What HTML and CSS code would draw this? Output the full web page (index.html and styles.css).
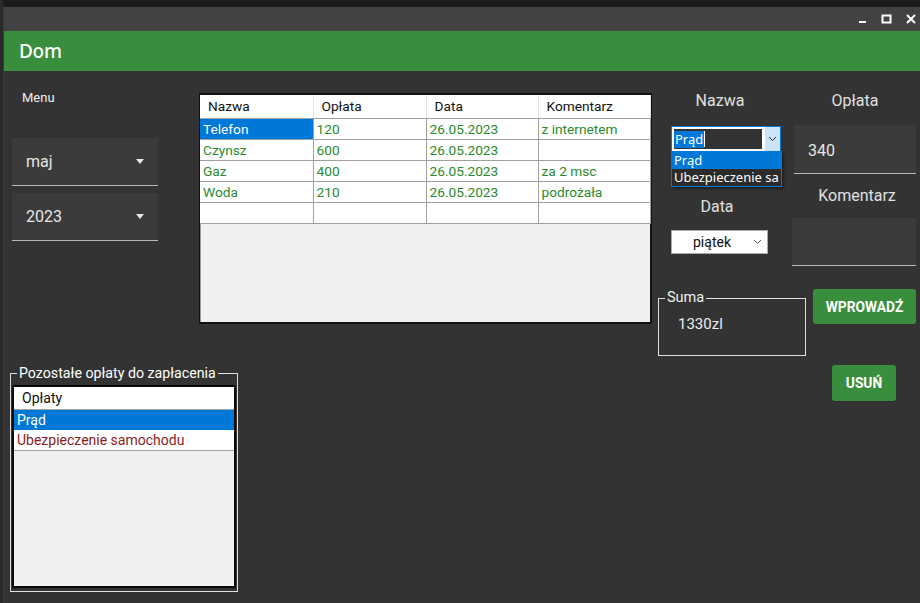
FILE: index.html
```html
<!DOCTYPE html>
<html lang="pl">
<head>
<meta charset="utf-8">
<title>Dom</title>
<link rel="stylesheet" href="styles.css">
</head>
<body>
<div class="window">
  <div class="titlebar">
    <svg class="tb-icon" width="10" height="10" viewBox="0 0 10 10"><rect x="1" y="7" width="7" height="2" fill="#fff"/></svg>
    <svg class="tb-icon" width="12" height="10" viewBox="0 0 12 10"><rect x="1.5" y="1.5" width="8" height="7" fill="none" stroke="#fff" stroke-width="2"/></svg>
    <svg class="tb-icon" width="11" height="10" viewBox="0 0 11 10"><path d="M1 1 L9 9 M9 1 L1 9" stroke="#fff" stroke-width="2"/></svg>
  </div>
  <div class="header">Dom</div>
  <div class="content">
    <div class="toprow">
      <div class="leftcol">
        <div class="menu">Menu</div>
        <div class="mcombo first"><span>maj</span><span class="caret"></span></div>
        <div class="mcombo"><span>2023</span><span class="caret"></span></div>
      </div>
      <div class="grid">
        <table>
          <thead>
            <tr><th>Nazwa</th><th>Opłata</th><th>Data</th><th>Komentarz</th></tr>
          </thead>
          <tbody>
            <tr><td class="sel">Telefon</td><td>120</td><td>26.05.2023</td><td>z internetem</td></tr>
            <tr><td>Czynsz</td><td>600</td><td>26.05.2023</td><td></td></tr>
            <tr><td>Gaz</td><td>400</td><td>26.05.2023</td><td>za 2 msc</td></tr>
            <tr><td>Woda</td><td>210</td><td>26.05.2023</td><td>podrożała</td></tr>
            <tr><td>&nbsp;</td><td></td><td></td><td></td></tr>
          </tbody>
        </table>
      </div>
      <div class="rightpanel">
        <div class="rcol1">
          <div class="lbl lbl-nazwa">Nazwa</div>
          <div class="wcombo">
            <div class="wc-input"><span class="wc-sel">Prąd</span><span class="wc-cursor"></span></div>
            <div class="wc-btn"><svg width="9" height="6" viewBox="0 0 9 6"><path d="M1 1 L4.5 4.5 L8 1" fill="none" stroke="#333" stroke-width="1"/></svg></div>
            <div class="wc-list">
              <div class="wc-item active">Prąd</div>
              <div class="wc-item">Ubezpieczenie sa</div>
            </div>
          </div>
          <div class="lbl lbl-data">Data</div>
          <div class="datebox"><span>piątek</span><svg width="9" height="6" viewBox="0 0 9 6"><path d="M1 1 L4.5 4.5 L8 1" fill="none" stroke="#555" stroke-width="1"/></svg></div>
          <fieldset class="suma">
            <legend>Suma</legend>
            <div class="suma-val">1330zl</div>
          </fieldset>
        </div>
        <div class="rcol2">
          <div class="lbl lbl-oplata">Opłata</div>
          <div class="mtext">340</div>
          <div class="lbl lbl-kom">Komentarz</div>
          <div class="mtext kom"></div>
          <button class="gbtn wpr">WPROWADŹ</button>
        </div>
      </div>
    </div>
    <div class="bottomrow">
      <fieldset class="pozo">
        <legend>Pozostałe opłaty do zapłacenia</legend>
        <div class="list">
          <div class="list-head">Opłaty</div>
          <div class="list-row sel">Prąd</div>
          <div class="list-row red">Ubezpieczenie samochodu</div>
        </div>
      </fieldset>
      <button class="gbtn usun">USUŃ</button>
    </div>
  </div>
</div>
</body>
</html>
```
FILE: styles.css
```css
* { box-sizing: border-box; }
html, body { margin: 0; padding: 0; }
body {
  background: #1c1c1c;
  width: 920px;
  height: 603px;
  overflow: hidden;
  font-family: Roboto, "Noto Sans", sans-serif;
  border-left: 3px solid #2a2a2a;
}
.window {
  margin-top: 7px;
  height: 596px;
  background: #333333;
  border-left: 1px solid #3c3c3c;
}
.titlebar {
  height: 24px;
  background: #424242;
  display: flex;
  justify-content: flex-end;
  align-items: center;
  gap: 13px;
  padding-right: 3px;
}
.tb-icon { display: block; }
.header {
  height: 40px;
  background: #388e3c;
  color: #fff;
  font-size: 19px;
  font-family: "Noto Sans", sans-serif;
  font-weight: 500;
  padding-left: 15px;
  line-height: 40px;
  letter-spacing: -0.3px;
}
.content { position: relative; }
.toprow { display: flex; height: 294px; }
.leftcol { width: 195px; flex: none; padding-left: 8px; }
.menu {
  color: #f0f0f0;
  font-size: 13px;
  padding: 19px 0 0 10px;
  height: 67px;
}
.mcombo {
  width: 146px;
  height: 48px;
  background: #3b3b3b;
  border-bottom: 1px solid #b8b8b8;
  display: flex;
  align-items: center;
  justify-content: space-between;
  padding: 0 14px;
  color: #e6e6e6;
  font-size: 16px;
  margin-bottom: 7px;
}
.caret {
  width: 0; height: 0;
  border-left: 4px solid transparent;
  border-right: 4px solid transparent;
  border-top: 5px solid #e6e6e6;
}
.grid {
  flex: none;
  margin-top: 22px;
  width: 453px;
  height: 231px;
  background: #f0f0f0;
  border: 1px solid #111;
  border-top-width: 2px;
  border-left-width: 1px;
  border-bottom-width: 2px;
  border-right-width: 2px;
  box-shadow: inset 1px 0 0 #999;
}
table {
  border-collapse: collapse;
  font-family: Roboto, sans-serif;
  font-size: 13.7px;
  table-layout: fixed;
  width: 451px;
}
th {
  background: #fff;
  color: #111;
  font-weight: 400;
  text-align: left;
  height: 23px;
  padding: 0 0 0 8px;
  border-right: 1px solid #e4e4e4;
  border-bottom: 1px solid #a0a0a0;
}
td {
  background: #fff;
  color: #2b8a2b;
  height: 21px;
  padding: 0 0 0 3px;
  border: 1px solid #a0a0a0;
  border-top: none;
  border-left: none;
  white-space: nowrap;
}
td.sel { background: #0078d7; color: #fff; }
th:first-child, td:first-child { width: 113px; }
th:nth-child(2), td:nth-child(2) { width: 113px; }
th:nth-child(3), td:nth-child(3) { width: 112px; }
.rightpanel { display: flex; margin-left: 6px; }
.rcol1 { width: 136px; flex: none; position: relative; }
.rcol2 { width: 126px; flex: none; }
.lbl { color: #e0e0e0; font-size: 16px; text-align: center; }
.lbl-nazwa { padding-top: 20px; height: 55px; width: 124px; }
.wcombo {
  position: relative;
  margin-left: 13px;
  width: 110px;
  height: 26px;
  border: 1px solid #0078d7;
  display: flex;
  background: #fff;
}
.wc-input {
  flex: 1;
  background: #333;
  border: 2px solid #fff;
  border-right-width: 3px;
  font-family: "Noto Sans", sans-serif;
  font-size: 13px;
  display: flex;
  align-items: center;
}
.wc-sel { background: #0078d7; color: #fff; line-height: 17px; padding: 0 1px; }
.wc-cursor { width: 1px; height: 16px; background: #fff; }
.wc-btn {
  width: 15px;
  background: #cce4f7;
  display: flex;
  align-items: center;
  justify-content: center;
}
.wc-list {
  position: absolute;
  left: -1px;
  top: 24px;
  width: 111px;
  border: 1px solid #0078d7;
  background: #2b2b2b;
  box-shadow: 2px 2px 3px rgba(0,0,0,0.4);
  z-index: 2;
  font-family: "Noto Sans", sans-serif;
  font-size: 13px;
  color: #fff;
}
.wc-item { height: 17px; line-height: 17px; padding-left: 2px; white-space: nowrap; overflow: hidden; }
.wc-item.active { background: #0078d7; }
.lbl-data { padding-top: 45px; height: 78px; width: 118px; }
.datebox {
  margin-left: 13px;
  width: 97px;
  height: 24px;
  background: #fff;
  border: 1px solid #aaa;
  display: flex;
  align-items: center;
  justify-content: space-between;
  padding: 0 5px 0 21px;
  font-size: 14px;
  color: #111;
}
.suma {
  margin: 37px 0 0 0;
  width: 148px;
  height: 65px;
  border: 1px solid #e0e0e0;
  padding: 0;
  color: #f0f0f0;
}
.suma legend { font-size: 14.5px; padding: 0 2px; margin-left: 6px; line-height: 14px; }
.suma-val { font-size: 15px; padding: 10px 0 0 19px; }
.lbl-oplata { padding-top: 20px; height: 54px; margin-left: -4px; }
.mtext {
  margin-left: 0;
  width: 122px;
  height: 49px;
  background: #3b3b3b;
  border-bottom: 1px solid #b8b8b8;
  color: #e6e6e6;
  font-size: 16px;
  padding: 16px 0 0 14px;
}
.lbl-kom { padding-top: 12px; height: 44px; margin-left: 0; }
.mtext.kom { margin-left: -2px; width: 124px; height: 48px; }
.gbtn {
  background: #388e3c;
  color: #fff;
  border: none;
  border-radius: 3px;
  font-family: Roboto, sans-serif;
  font-weight: 700;
  font-size: 13.8px;
  display: block;
}
.wpr { margin: 23px 0 0 19px; width: 103px; height: 35px; }
.bottomrow { display: flex; height: 240px; }
.pozo {
  flex: none;
  margin: 1px 0 0 6px;
  width: 228px;
  height: 226px;
  border: 1px solid #e0e0e0;
  padding: 4px 1px 1px 1px;
  color: #fff;
}
.pozo legend { font-size: 14.2px; padding: 0 2px; margin-left: 5px; line-height: 15px; }
.list {
  height: 203px;
  border: 2px solid #0a0a0a;
  background: #f0f0f0;
  font-family: Roboto, sans-serif;
  font-size: 14px;
}
.list-head { background: #fff; color: #111; height: 23px; line-height: 23px; padding-left: 8px; border-bottom: 1px solid #a0a0a0; }
.list-row { height: 20px; line-height: 20px; padding-left: 3px; background: #fff; }
.list-row.sel { background: #0078d7; color: #fff; }
.list-row.red { color: #8b1c1c; border-bottom: 1px solid #a0a0a0; height: 21px; }
.usun { margin: 0 0 0 594px; width: 64px; height: 36px; }
```
